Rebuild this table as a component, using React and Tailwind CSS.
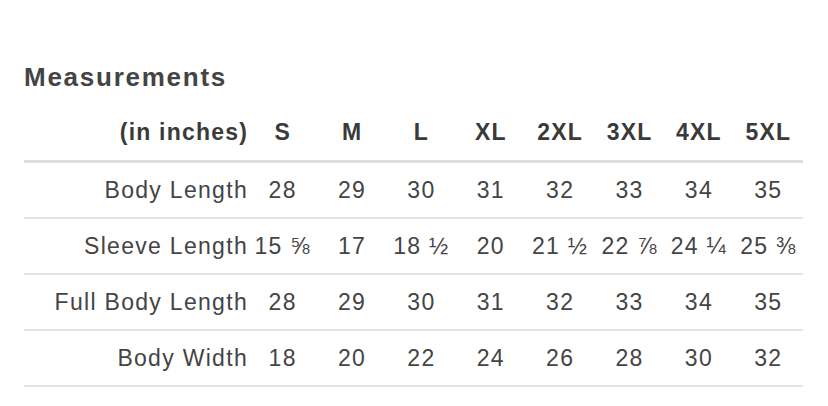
const sizes = ['S', 'M', 'L', 'XL', '2XL', '3XL', '4XL', '5XL']

const rows = [
  { label: 'Body Length',      values: ['28', '29', '30', '31', '32', '33', '34', '35'] },
  { label: 'Sleeve Length',    values: ['15 ⅝', '17', '18 ½', '20', '21 ½', '22 ⅞', '24 ¼', '25 ⅜'] },
  { label: 'Full Body Length', values: ['28', '29', '30', '31', '32', '33', '34', '35'] },
  { label: 'Body Width',       values: ['18', '20', '22', '24', '26', '28', '30', '32'] },
]

export default function App() {
  return (
    <div
      className="w-[828px] h-[406px] bg-white overflow-hidden px-[24px] pr-[25px]"
      style={{ fontFamily: '"Liberation Sans", Arial, sans-serif' }}
    >
      <h2 className="mt-[62px] h-[30px] leading-[30px] text-[26px] font-bold tracking-[1.75px] text-[#444]">
        Measurements
      </h2>

      <div className="mt-[13px] grid grid-cols-[224px_repeat(8,1fr)] h-[58px] border-b-[3px] border-[#dedee1] text-[23px] font-bold tracking-[1.2px] text-[#3a3a3a]">
        <div className="flex items-center justify-end">(in inches)</div>
        {sizes.map(s => (
          <div key={s} className="flex items-center justify-center">{s}</div>
        ))}
      </div>

      {rows.map(row => (
        <div
          key={row.label}
          className="grid grid-cols-[224px_repeat(8,1fr)] h-[56px] border-b-2 border-[#e4e4e6] text-[23px] tracking-[1.3px] text-[#444]"
        >
          <div className="flex items-center justify-end whitespace-nowrap">{row.label}</div>
          {row.values.map((v, i) => (
            <div key={i} className="flex items-center justify-center whitespace-nowrap">{v}</div>
          ))}
        </div>
      ))}
    </div>
  )
}
